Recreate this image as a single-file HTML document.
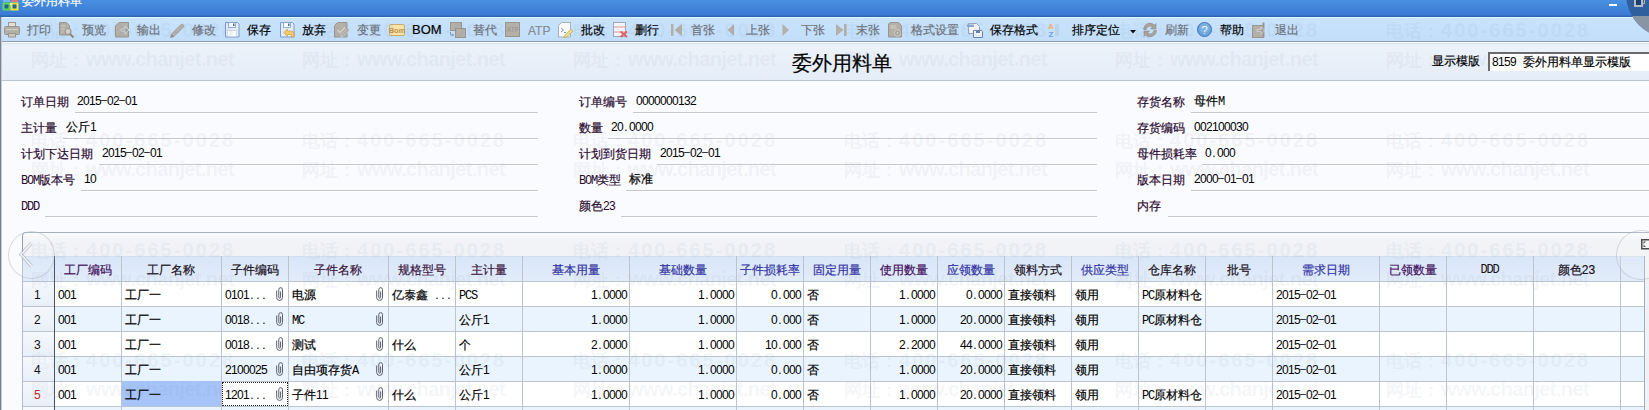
<!DOCTYPE html>
<html><head><meta charset="utf-8">
<style>
*{box-sizing:border-box}
html,body{margin:0;padding:0}
body{width:1649px;height:410px;overflow:hidden;position:relative;background:#fafbfe;font-family:"Liberation Sans",sans-serif;font-size:12px;color:#000}
.ab{position:absolute}
.t{position:absolute;white-space:nowrap;line-height:14px;font-size:12px;-webkit-text-stroke:0.2px currentColor}
.mono{font-family:"Liberation Mono",monospace;letter-spacing:-1.2px;-webkit-text-stroke:0}
i.bd,i.bl{display:inline-block;width:6px;text-align:center;font-style:normal;-webkit-text-stroke:0;font-size:12px;letter-spacing:0}
i.bl{font-family:"Liberation Mono",monospace}
#title{left:0;top:0;width:1649px;height:17px;background:linear-gradient(#4990e2,#3a7ad4 15px,#2f64b0 16px,#2f64b0)}
#tb{left:0;top:17px;width:1649px;height:25px;background:linear-gradient(#c8e3fc,#c2defa);border-top:1px solid #def8ff;border-bottom:1px solid #929eac}
#hd{left:0;top:42px;width:1649px;height:39px;background:linear-gradient(#f4f9ff 0,#f4f9ff 1px,#dce8f4 1px,#dce8f4 2px,#ecf2fa 3px,#e5edf8);border-bottom:1px solid #bcc4d0}
.lbl{color:#2a0a30}
.ul{position:absolute;height:2px;border-top:1px solid #c6c8cc;background:#fff}
.wm{position:absolute;white-space:nowrap;font-size:20px;line-height:20px;font-weight:bold;color:rgba(110,120,150,0.085)}.wc{font-size:18px;display:inline-block;width:55px}.wd{letter-spacing:2.05px}.wu{letter-spacing:-0.6px}
.tbt{position:absolute;white-space:nowrap;font-size:12px;line-height:14px;top:23px;-webkit-text-stroke:0.2px currentColor}
.dis{color:#6e737a}
svg{position:absolute;overflow:visible}
</style></head><body>

<div class="ab" id="title"></div>
<div class="t" style="left:22px;top:-6px;color:#fff;font-size:12px">委外用料单</div>
<svg style="left:0;top:0" width="20" height="12" viewBox="0 0 20 12">
<rect x="3" y="-3" width="7" height="5" fill="#70b4f0"/><rect x="11" y="-3" width="7" height="5" fill="#e8786a"/><rect x="11" y="-3" width="2" height="5" fill="#b080c0"/>
<rect x="3.5" y="3.5" width="6" height="6" fill="#2a5e9e" stroke="#5cd860" stroke-width="2"/><rect x="11.5" y="3.5" width="6" height="6" fill="#2a5e9e" stroke="#f2e838" stroke-width="2"/>
<rect x="10" y="3" width="1.5" height="2" fill="#e0f0ff"/>
</svg>
<div class="ab" style="left:1609px;top:4px;width:8px;height:2px;background:#fff"></div>
<div class="ab" id="tb"></div>
<div class="ab" id="hd"></div>
<div class="ab" style="left:1626px;top:-51px;width:89px;height:89px;border-radius:50%;background:#2f5f9c;overflow:hidden"><div class="ab" style="left:0;top:67px;width:88px;height:40px;background:#8a95a4"></div></div>
<svg style="left:1634px;top:-3px" width="12" height="10"><rect x="4.5" y="0.5" width="6" height="6" fill="none" stroke="#a8b0bc" stroke-width="1.2"/><rect x="1" y="2" width="7" height="7" fill="#1e3e6e" stroke="#b4bcc8" stroke-width="2"/></svg>
<svg style="left:4px;top:22px" width="16" height="16"><rect x="4.5" y="0.5" width="7" height="4" fill="#e4e0d8" stroke="#9a968e"/><rect x="0.5" y="4.5" width="15" height="8" rx="1" fill="#b4b0a8" stroke="#9a968e"/><path d="M2 7.5h12" stroke="#d4d0c8"/><rect x="4.5" y="11.5" width="7" height="3.5" fill="#ccc8c0" stroke="#9a968e"/></svg>
<svg style="left:59px;top:22px" width="16" height="16"><path d="M0.5 0.5h7l3 3v9.5h-10z" fill="#b4b0a8" stroke="#9a968e"/><path d="M2 4h4M2 7h5M2 10h4" stroke="#d4d0c8"/><circle cx="9" cy="9.5" r="3" fill="#d4d0c8" stroke="#9a968e" stroke-width="1.2"/><path d="M11 12l3.5 3.5" stroke="#8a867e" stroke-width="2"/></svg>
<svg style="left:115px;top:22px" width="16" height="16"><path d="M0.5 4l3.5-3.5h9.5v14.5h-13z" fill="#b4b0a8" stroke="#9a968e"/><path d="M6 7h4v-3l4 4-4 4v-3h-4z" fill="#a8a49c" stroke="#dfe6ee" stroke-width="0.7"/></svg>
<svg style="left:170px;top:22px" width="16" height="16"><path d="M1.5 12l9.5-9.5a1.8 1.8 0 0 1 2.5 2.5l-9.5 9.5-3.5 1z" fill="#b4b0a8" stroke="#9a968e" stroke-width="0.8"/><path d="M1 15.5l0.8-3 2.2 2.2z" fill="#8a867e"/></svg>
<svg style="left:225px;top:22px" width="15" height="16"><path d="M0.5 0.5h12l1.5 1.5v13h-13.5z" fill="#e4ecf8" stroke="#7e9cc8"/><rect x="3.5" y="0.5" width="7" height="5" fill="#fafcff" stroke="#7e9cc8" stroke-width="0.8"/><rect x="8" y="1.5" width="1.5" height="2.5" fill="#556a90"/><rect x="2.5" y="8.5" width="9" height="6" fill="#f6f8fc" stroke="#c0cce0" stroke-width="0.6"/></svg>
<svg style="left:280px;top:22px" width="16" height="16"><path d="M0.5 0.5h12l1.5 1.5v13h-13.5z" fill="#e4ecf8" stroke="#7e9cc8"/><rect x="3.5" y="0.5" width="7" height="5" fill="#fafcff" stroke="#7e9cc8" stroke-width="0.8"/><rect x="8" y="1.5" width="1.5" height="2.5" fill="#556a90"/><path d="M3.5 10.5l4-3.5v2h3.5a3 3 0 0 1 3 3v3h-2.5v-2.5h-4v2z" fill="#f2c870" stroke="#c8983c" stroke-width="0.6"/></svg>
<svg style="left:334px;top:22px" width="16" height="16"><path d="M0.5 3.5l3-3h9.5v14.5h-12.5z" fill="#b4b0a8" stroke="#9a968e"/><path d="M3.5 8l2.5 2.5 5-5" stroke="#d4d0c8" stroke-width="1.4" fill="none"/><path d="M7 15l1-2.5 6-6 1.5 1.5-6 6z" fill="#a8a49c" stroke="#dfe6ee" stroke-width="0.5"/></svg>
<svg style="left:389px;top:24px" width="16" height="12"><rect x="0.5" y="0.5" width="15" height="11" rx="1.5" fill="#f8e4a8" stroke="#c8ac70"/><text x="8" y="8.8" font-size="7.5" font-weight="bold" font-family="Liberation Sans" text-anchor="middle" fill="#c09448">Bom</text></svg>
<svg style="left:450px;top:22px" width="16" height="16"><rect x="0.5" y="0.5" width="11" height="8" fill="#b4b0a8" stroke="#9a968e"/><rect x="5.5" y="6.5" width="10" height="9" fill="#b4b0a8" stroke="#9a968e"/><path d="M0.5 10v3h3M2 11.5l1.5 1.5-1.5 1.5" stroke="#7a92b8" fill="none" stroke-width="0.9"/></svg>
<svg style="left:505px;top:22px" width="15" height="15"><rect x="0.5" y="0.5" width="14" height="14" fill="#b4b0a8" stroke="#9a968e"/><text x="7.5" y="10" font-size="6.5" font-family="Liberation Sans" text-anchor="middle" fill="#a09c94" font-weight="bold">ATP</text></svg>
<svg style="left:558px;top:22px" width="16" height="16"><path d="M0.5 3.5l3-3h9v14.5h-12z" fill="#f6f8fa" stroke="#a8b0b8"/><path d="M3 6l2.5 2-2.5 2M6 10.5h2" stroke="#7a8aa0" fill="none" stroke-width="0.9"/><path d="M6 15.5l1-2.5 6-6 2 2-6 6z" fill="#eedc80" stroke="#b8a050" stroke-width="0.6"/></svg>
<svg style="left:613px;top:22px" width="16" height="16"><rect x="0.5" y="0.5" width="12" height="14" fill="#f4f6fa" stroke="#98a8c0"/><path d="M1 5h11.5M1 10h11.5" stroke="#e89090" stroke-width="1"/><path d="M7.5 9.5l6.5 5.5M14 9.5l-6.5 5.5" stroke="#e06060" stroke-width="1.8"/></svg>
<svg style="left:671px;top:23px" width="12" height="14"><rect x="0" y="1" width="2.5" height="12" fill="#b4b0a8"/><path d="M11 1v12l-7.5-6z" fill="#b4b0a8"/></svg>
<svg style="left:727px;top:23px" width="8" height="14"><path d="M7 1v12l-6.5-6z" fill="#b4b0a8"/></svg>
<svg style="left:782px;top:23px" width="8" height="14"><path d="M0.5 1v12l6.5-6z" fill="#b4b0a8"/></svg>
<svg style="left:836px;top:23px" width="12" height="14"><path d="M0 1v12l7.5-6z" fill="#b4b0a8"/><rect x="8" y="1" width="2.5" height="12" fill="#b4b0a8"/></svg>
<svg style="left:888px;top:22px" width="16" height="16"><path d="M0.5 2l1.5-1.5h8.5l3 3v11.5h-13z" fill="#b4b0a8" stroke="#9a968e"/><path d="M2.5 4h6M2.5 6h6" stroke="#d4d0c8"/><circle cx="9.5" cy="11" r="3.2" fill="#a8a49c" stroke="#d4d0c8" stroke-width="0.9"/><circle cx="9.5" cy="11" r="1" fill="#d4d0c8"/></svg>
<svg style="left:967px;top:22px" width="16" height="16"><path d="M1.5 1.5h8l3 3v7h-11z" fill="#f4f6fa" stroke="#98a4b8"/><rect x="0" y="2.5" width="7" height="2.5" fill="#8aa6d4"/><path d="M6.5 8.5h8l1 1v6h-9z" fill="#f0f4fa" stroke="#6a82aa"/><rect x="9" y="8.5" width="4" height="2.5" fill="#6a82aa"/></svg>
<svg style="left:1047px;top:21px" width="12" height="17"><text x="4" y="8" font-size="8" font-weight="bold" font-family="Liberation Sans" text-anchor="middle" fill="#f0b060">A</text><text x="4" y="16" font-size="8" font-weight="bold" font-family="Liberation Sans" text-anchor="middle" fill="#6aa0e0">Z</text><path d="M9 3v12M11 3v12" stroke="#b0bccc" stroke-width="0.8"/></svg>
<svg style="left:1130px;top:30px" width="6" height="4"><path d="M0 0h6l-3 3.5z" fill="#111"/></svg>
<svg style="left:1142px;top:22px" width="16" height="16"><path d="M1.5 7.5a6.5 6.5 0 0 1 11-4.5l1.5-1.5v5.5h-5.5l2-2a3.8 3.8 0 0 0-6.3 2.5z" fill="#a8a49c" stroke="#8e8a82" stroke-width="0.6"/><path d="M14.5 8.5a6.5 6.5 0 0 1-11 4.5l-1.5 1.5v-5.5h5.5l-2 2a3.8 3.8 0 0 0 6.3-2.5z" fill="#a8a49c" stroke="#8e8a82" stroke-width="0.6"/></svg>
<svg style="left:1197px;top:22px" width="16" height="16"><circle cx="7.5" cy="7.5" r="7" fill="#6aa4dc" stroke="#3c74b8" stroke-width="1"/><circle cx="7.5" cy="6" r="5" fill="#8cbce8" opacity="0.6"/><text x="7.5" y="12" font-size="11" font-family="Liberation Sans" text-anchor="middle" fill="#fff">?</text></svg>
<svg style="left:1252px;top:22px" width="16" height="16"><rect x="0.5" y="3.5" width="11" height="12" fill="#b4b0a8" stroke="#9a968e"/><path d="M11.5 0.5v15" stroke="#9a968e" stroke-width="2"/><path d="M5 7.5h4v-2.5l4 3.5-4 3.5v-2.5h-4z" fill="#a8a49c" stroke="#dfe6ee" stroke-width="0.6"/></svg>
<div class="tbt dis" style="left:27px">打印</div>
<div class="tbt dis" style="left:82px">预览</div>
<div class="tbt dis" style="left:137px">输出</div>
<div class="tbt dis" style="left:192px">修改</div>
<div class="tbt" style="left:247px">保存</div>
<div class="tbt" style="left:302px">放弃</div>
<div class="tbt dis" style="left:357px">变更</div>
<div class="tbt dis" style="left:473px">替代</div>
<div class="tbt" style="left:581px">批改</div>
<div class="tbt" style="left:635px">删行</div>
<div class="tbt dis" style="left:691px">首张</div>
<div class="tbt dis" style="left:746px">上张</div>
<div class="tbt dis" style="left:801px">下张</div>
<div class="tbt dis" style="left:856px">末张</div>
<div class="tbt dis" style="left:911px">格式设置</div>
<div class="tbt" style="left:990px">保存格式</div>
<div class="tbt" style="left:1072px">排序定位</div>
<div class="tbt dis" style="left:1165px">刷新</div>
<div class="tbt" style="left:1220px">帮助</div>
<div class="tbt dis" style="left:1275px">退出</div>
<div class="tbt" style="left:412px;top:22px;font-size:13px;line-height:16px">BOM</div>
<div class="tbt dis" style="left:528px;top:23px;font-size:12px;line-height:16px;color:#868c94">ATP</div>
<div class="t" style="left:792px;top:52px;font-size:20px;line-height:22px">委外用料单</div>
<div class="t" style="left:1432px;top:54px">显示模版</div>
<div class="ab" style="left:1488px;top:52px;width:170px;height:19px;background:#fff;border-top:2px solid #6a6a6a;border-left:2px solid #6a6a6a;"></div>
<div class="t" style="left:1492px;top:55px"><i class="bd">8</i><i class="bd">1</i><i class="bd">5</i><i class="bd">9</i><span style="margin-left:7px">委外用料单显示模版</span></div>
<div class="t lbl" style="left:21px;top:95px">订单日期</div>
<div class="t" style="left:77px;top:94px"><i class="bd">2</i><i class="bd">0</i><i class="bd">1</i><i class="bd">5</i><i class="bd" style="font-size:10.5px;position:relative;top:-2px">&#8211;</i><i class="bd">0</i><i class="bd">2</i><i class="bd" style="font-size:10.5px;position:relative;top:-2px">&#8211;</i><i class="bd">0</i><i class="bd">1</i></div>
<div class="ul" style="left:75px;top:112px;width:463px"></div>
<div class="t lbl" style="left:21px;top:121px">主计量</div>
<div class="t" style="left:66px;top:120px">公斤<i class="bd">1</i></div>
<div class="ul" style="left:63px;top:138px;width:475px"></div>
<div class="t lbl" style="left:21px;top:147px">计划下达日期</div>
<div class="t" style="left:102px;top:146px"><i class="bd">2</i><i class="bd">0</i><i class="bd">1</i><i class="bd">5</i><i class="bd" style="font-size:10.5px;position:relative;top:-2px">&#8211;</i><i class="bd">0</i><i class="bd">2</i><i class="bd" style="font-size:10.5px;position:relative;top:-2px">&#8211;</i><i class="bd">0</i><i class="bd">1</i></div>
<div class="ul" style="left:99px;top:164px;width:439px"></div>
<div class="t lbl" style="left:21px;top:173px"><i class="bl">B</i><i class="bl">O</i><i class="bl">M</i>版本号</div>
<div class="t" style="left:84px;top:172px"><i class="bd">1</i><i class="bd">0</i></div>
<div class="ul" style="left:81px;top:190px;width:457px"></div>
<div class="t lbl" style="left:21px;top:199px"><i class="bl">D</i><i class="bl">D</i><i class="bl">D</i></div>
<div class="ul" style="left:45px;top:216px;width:493px"></div>
<div class="t lbl" style="left:579px;top:95px">订单编号</div>
<div class="t" style="left:636px;top:94px"><i class="bd">0</i><i class="bd">0</i><i class="bd">0</i><i class="bd">0</i><i class="bd">0</i><i class="bd">0</i><i class="bd">0</i><i class="bd">1</i><i class="bd">3</i><i class="bd">2</i></div>
<div class="ul" style="left:633px;top:112px;width:464px"></div>
<div class="t lbl" style="left:579px;top:121px">数量</div>
<div class="t" style="left:611px;top:120px"><i class="bd">2</i><i class="bd">0</i><i class="bd">.</i><i class="bd">0</i><i class="bd">0</i><i class="bd">0</i><i class="bd">0</i></div>
<div class="ul" style="left:608px;top:138px;width:489px"></div>
<div class="t lbl" style="left:579px;top:147px">计划到货日期</div>
<div class="t" style="left:660px;top:146px"><i class="bd">2</i><i class="bd">0</i><i class="bd">1</i><i class="bd">5</i><i class="bd" style="font-size:10.5px;position:relative;top:-2px">&#8211;</i><i class="bd">0</i><i class="bd">2</i><i class="bd" style="font-size:10.5px;position:relative;top:-2px">&#8211;</i><i class="bd">0</i><i class="bd">1</i></div>
<div class="ul" style="left:657px;top:164px;width:440px"></div>
<div class="t lbl" style="left:579px;top:173px"><i class="bl">B</i><i class="bl">O</i><i class="bl">M</i>类型</div>
<div class="t" style="left:629px;top:172px">标准</div>
<div class="ul" style="left:626px;top:190px;width:471px"></div>
<div class="t lbl" style="left:579px;top:199px">颜色<i class="bd">2</i><i class="bd">3</i></div>
<div class="ul" style="left:621px;top:216px;width:476px"></div>
<div class="t lbl" style="left:1137px;top:95px">存货名称</div>
<div class="t" style="left:1194px;top:94px">母件<i class="bl">M</i></div>
<div class="ul" style="left:1191px;top:112px;width:458px"></div>
<div class="t lbl" style="left:1137px;top:121px">存货编码</div>
<div class="t" style="left:1194px;top:120px"><i class="bd">0</i><i class="bd">0</i><i class="bd">2</i><i class="bd">1</i><i class="bd">0</i><i class="bd">0</i><i class="bd">0</i><i class="bd">3</i><i class="bd">0</i></div>
<div class="ul" style="left:1191px;top:138px;width:458px"></div>
<div class="t lbl" style="left:1137px;top:147px">母件损耗率</div>
<div class="t" style="left:1205px;top:146px"><i class="bd">0</i><i class="bd">.</i><i class="bd">0</i><i class="bd">0</i><i class="bd">0</i></div>
<div class="ul" style="left:1202px;top:164px;width:447px"></div>
<div class="t lbl" style="left:1137px;top:173px">版本日期</div>
<div class="t" style="left:1194px;top:172px"><i class="bd">2</i><i class="bd">0</i><i class="bd">0</i><i class="bd">0</i><i class="bd" style="font-size:10.5px;position:relative;top:-2px">&#8211;</i><i class="bd">0</i><i class="bd">1</i><i class="bd" style="font-size:10.5px;position:relative;top:-2px">&#8211;</i><i class="bd">0</i><i class="bd">1</i></div>
<div class="ul" style="left:1191px;top:190px;width:458px"></div>
<div class="t lbl" style="left:1137px;top:199px">内存</div>
<div class="ul" style="left:1168px;top:216px;width:481px"></div>
<div class="ab" style="left:22px;top:232px;width:1640px;height:200px;border-top:1px solid #a8b0c0;border-left:1px solid #8c94a6;border-top-left-radius:4px;background:linear-gradient(#fbfcfe,#f6f8fb 3px,#f1f3f6 8px,#f0f2f5 24px)"></div>
<div class="ab" style="left:23px;top:256px;width:1621px;height:25px;background:linear-gradient(#d8e6f8,#e2ecfa)"></div>
<div class="ab" style="left:54px;top:281px;width:1590px;height:25px;background:#ffffff"></div>
<div class="ab" style="left:23px;top:281px;width:31px;height:25px;background:linear-gradient(#f6f9fd,#e8eff8)"></div>
<div class="ab" style="left:54px;top:306px;width:1590px;height:25px;background:#e9f4fe"></div>
<div class="ab" style="left:23px;top:306px;width:31px;height:25px;background:linear-gradient(#f6f9fd,#e8eff8)"></div>
<div class="ab" style="left:54px;top:331px;width:1590px;height:25px;background:#ffffff"></div>
<div class="ab" style="left:23px;top:331px;width:31px;height:25px;background:linear-gradient(#f6f9fd,#e8eff8)"></div>
<div class="ab" style="left:54px;top:356px;width:1590px;height:25px;background:#e9f4fe"></div>
<div class="ab" style="left:23px;top:356px;width:31px;height:25px;background:linear-gradient(#f6f9fd,#e8eff8)"></div>
<div class="ab" style="left:54px;top:381px;width:1590px;height:25px;background:#ffffff"></div>
<div class="ab" style="left:23px;top:381px;width:31px;height:25px;background:linear-gradient(#f6f9fd,#e8eff8)"></div>
<div class="ab" style="left:54px;top:406px;width:1590px;height:10px;background:#e9f4fe"></div>
<div class="ab" style="left:23px;top:406px;width:31px;height:10px;background:#f6f9fd"></div>
<div class="ab" style="left:23px;top:256px;width:1621px;height:1px;background:#d4deec"></div>
<div class="ab" style="left:23px;top:281px;width:1621px;height:1px;background:#bcc4d0"></div>
<div class="ab" style="left:23px;top:306px;width:1621px;height:1px;background:#bcc4d0"></div>
<div class="ab" style="left:23px;top:331px;width:1621px;height:1px;background:#bcc4d0"></div>
<div class="ab" style="left:23px;top:356px;width:1621px;height:1px;background:#bcc4d0"></div>
<div class="ab" style="left:23px;top:381px;width:1621px;height:1px;background:#bcc4d0"></div>
<div class="ab" style="left:23px;top:406px;width:1621px;height:1px;background:#bcc4d0"></div>
<div class="ab" style="left:121px;top:256px;width:1px;height:160px;background:#bcc4d0"></div>
<div class="ab" style="left:221px;top:256px;width:1px;height:160px;background:#bcc4d0"></div>
<div class="ab" style="left:288px;top:256px;width:1px;height:160px;background:#bcc4d0"></div>
<div class="ab" style="left:388px;top:256px;width:1px;height:160px;background:#bcc4d0"></div>
<div class="ab" style="left:455px;top:256px;width:1px;height:160px;background:#bcc4d0"></div>
<div class="ab" style="left:522px;top:256px;width:1px;height:160px;background:#bcc4d0"></div>
<div class="ab" style="left:629px;top:256px;width:1px;height:160px;background:#bcc4d0"></div>
<div class="ab" style="left:736px;top:256px;width:1px;height:160px;background:#bcc4d0"></div>
<div class="ab" style="left:803px;top:256px;width:1px;height:160px;background:#bcc4d0"></div>
<div class="ab" style="left:870px;top:256px;width:1px;height:160px;background:#bcc4d0"></div>
<div class="ab" style="left:937px;top:256px;width:1px;height:160px;background:#bcc4d0"></div>
<div class="ab" style="left:1004px;top:256px;width:1px;height:160px;background:#bcc4d0"></div>
<div class="ab" style="left:1071px;top:256px;width:1px;height:160px;background:#bcc4d0"></div>
<div class="ab" style="left:1138px;top:256px;width:1px;height:160px;background:#bcc4d0"></div>
<div class="ab" style="left:1205px;top:256px;width:1px;height:160px;background:#bcc4d0"></div>
<div class="ab" style="left:1272px;top:256px;width:1px;height:160px;background:#bcc4d0"></div>
<div class="ab" style="left:1379px;top:256px;width:1px;height:160px;background:#bcc4d0"></div>
<div class="ab" style="left:1446px;top:256px;width:1px;height:160px;background:#bcc4d0"></div>
<div class="ab" style="left:1533px;top:256px;width:1px;height:160px;background:#bcc4d0"></div>
<div class="ab" style="left:1620px;top:256px;width:1px;height:160px;background:#bcc4d0"></div>
<div class="ab" style="left:54px;top:256px;width:1px;height:160px;background:#4a5468"></div>
<div class="ab" style="left:122px;top:381px;width:99px;height:25px;background:#a6c4f8"></div>
<div class="ab" style="left:1644px;top:256px;width:1px;height:160px;background:#a4acba"></div>
<div class="ab" style="left:22px;top:256px;width:1px;height:160px;background:#b4bccc"></div>
<div class="t" style="left:54px;width:67px;top:263px;text-align:center;color:#44105e">工厂编码</div>
<div class="t" style="left:121px;width:100px;top:263px;text-align:center;color:#1a1020">工厂名称</div>
<div class="t" style="left:221px;width:67px;top:263px;text-align:center;color:#1a1020">子件编码</div>
<div class="t" style="left:288px;width:100px;top:263px;text-align:center;color:#3a1440">子件名称</div>
<div class="t" style="left:388px;width:67px;top:263px;text-align:center;color:#3a1440">规格型号</div>
<div class="t" style="left:455px;width:67px;top:263px;text-align:center;color:#3a1440">主计量</div>
<div class="t" style="left:522px;width:107px;top:263px;text-align:center;color:#3434a4">基本用量</div>
<div class="t" style="left:629px;width:107px;top:263px;text-align:center;color:#3434a4">基础数量</div>
<div class="t" style="left:736px;width:67px;top:263px;text-align:center;color:#3434a4">子件损耗率</div>
<div class="t" style="left:803px;width:67px;top:263px;text-align:center;color:#3434a4">固定用量</div>
<div class="t" style="left:870px;width:67px;top:263px;text-align:center;color:#44105e">使用数量</div>
<div class="t" style="left:937px;width:67px;top:263px;text-align:center;color:#3434a4">应领数量</div>
<div class="t" style="left:1004px;width:67px;top:263px;text-align:center;color:#1a1020">领料方式</div>
<div class="t" style="left:1071px;width:67px;top:263px;text-align:center;color:#3434a4">供应类型</div>
<div class="t" style="left:1138px;width:67px;top:263px;text-align:center;color:#1a1020">仓库名称</div>
<div class="t" style="left:1205px;width:67px;top:263px;text-align:center;color:#1a1020">批号</div>
<div class="t" style="left:1272px;width:107px;top:263px;text-align:center;color:#3434a4">需求日期</div>
<div class="t" style="left:1379px;width:67px;top:263px;text-align:center;color:#44105e">已领数量</div>
<div class="t mono" style="left:1446px;width:87px;top:263px;text-align:center;color:#1a1020">DDD</div>
<div class="t" style="left:1533px;width:87px;top:263px;text-align:center;color:#1a1020">颜色23</div>
<div class="t" style="left:1620px;width:24px;top:263px;text-align:center;color:#1a1020"></div>
<div class="t" style="left:22px;width:30px;top:288px;text-align:center;color:#111"><i class="bd">1</i></div>
<div class="t" style="left:58px;top:288px"><i class="bd">0</i><i class="bd">0</i><i class="bd">1</i></div>
<div class="t" style="left:125px;top:288px">工厂一</div>
<div class="t" style="left:225px;top:288px"><i class="bd">0</i><i class="bd">1</i><i class="bd">0</i><i class="bd">1</i><i class="bd">.</i><i class="bd">.</i><i class="bd">.</i></div>
<div class="t" style="left:292px;top:288px">电源</div>
<div class="t" style="left:392px;top:288px">亿泰鑫<i class="bd">&nbsp;</i><i class="bd">.</i><i class="bd">.</i><i class="bd">.</i></div>
<div class="t" style="left:459px;top:288px"><i class="bl">P</i><i class="bl">C</i><i class="bl">S</i></div>
<div class="t" style="left:522px;width:105px;top:288px;text-align:right"><i class="bd">1</i><i class="bd">.</i><i class="bd">0</i><i class="bd">0</i><i class="bd">0</i><i class="bd">0</i></div>
<div class="t" style="left:629px;width:105px;top:288px;text-align:right"><i class="bd">1</i><i class="bd">.</i><i class="bd">0</i><i class="bd">0</i><i class="bd">0</i><i class="bd">0</i></div>
<div class="t" style="left:736px;width:65px;top:288px;text-align:right"><i class="bd">0</i><i class="bd">.</i><i class="bd">0</i><i class="bd">0</i><i class="bd">0</i></div>
<div class="t" style="left:807px;top:288px">否</div>
<div class="t" style="left:870px;width:65px;top:288px;text-align:right"><i class="bd">1</i><i class="bd">.</i><i class="bd">0</i><i class="bd">0</i><i class="bd">0</i><i class="bd">0</i></div>
<div class="t" style="left:937px;width:65px;top:288px;text-align:right"><i class="bd">0</i><i class="bd">.</i><i class="bd">0</i><i class="bd">0</i><i class="bd">0</i><i class="bd">0</i></div>
<div class="t" style="left:1008px;top:288px">直接领料</div>
<div class="t" style="left:1075px;top:288px">领用</div>
<div class="t" style="left:1142px;top:288px"><i class="bl">P</i><i class="bl">C</i>原材料仓</div>
<div class="t" style="left:1276px;top:288px"><i class="bd">2</i><i class="bd">0</i><i class="bd">1</i><i class="bd">5</i><i class="bd" style="font-size:10.5px;position:relative;top:-2px">&#8211;</i><i class="bd">0</i><i class="bd">2</i><i class="bd" style="font-size:10.5px;position:relative;top:-2px">&#8211;</i><i class="bd">0</i><i class="bd">1</i></div>
<svg style="left:276px;top:287px" width="8" height="14" viewBox="0 0 8 14"><path d="M0.7 3.5V10.5A2.9 2.9 0 0 0 6.5 10.5V2.5A1.85 1.85 0 0 0 2.8 2.5V10.3A0.9 0.9 0 0 0 4.6 10.3V4.5" fill="none" stroke="#5a5e6a" stroke-width="1"/></svg>
<svg style="left:376px;top:287px" width="8" height="14" viewBox="0 0 8 14"><path d="M0.7 3.5V10.5A2.9 2.9 0 0 0 6.5 10.5V2.5A1.85 1.85 0 0 0 2.8 2.5V10.3A0.9 0.9 0 0 0 4.6 10.3V4.5" fill="none" stroke="#5a5e6a" stroke-width="1"/></svg>
<div class="t" style="left:22px;width:30px;top:313px;text-align:center;color:#111"><i class="bd">2</i></div>
<div class="t" style="left:58px;top:313px"><i class="bd">0</i><i class="bd">0</i><i class="bd">1</i></div>
<div class="t" style="left:125px;top:313px">工厂一</div>
<div class="t" style="left:225px;top:313px"><i class="bd">0</i><i class="bd">0</i><i class="bd">1</i><i class="bd">8</i><i class="bd">.</i><i class="bd">.</i><i class="bd">.</i></div>
<div class="t" style="left:292px;top:313px"><i class="bl">M</i><i class="bl">C</i></div>
<div class="t" style="left:459px;top:313px">公斤<i class="bd">1</i></div>
<div class="t" style="left:522px;width:105px;top:313px;text-align:right"><i class="bd">1</i><i class="bd">.</i><i class="bd">0</i><i class="bd">0</i><i class="bd">0</i><i class="bd">0</i></div>
<div class="t" style="left:629px;width:105px;top:313px;text-align:right"><i class="bd">1</i><i class="bd">.</i><i class="bd">0</i><i class="bd">0</i><i class="bd">0</i><i class="bd">0</i></div>
<div class="t" style="left:736px;width:65px;top:313px;text-align:right"><i class="bd">0</i><i class="bd">.</i><i class="bd">0</i><i class="bd">0</i><i class="bd">0</i></div>
<div class="t" style="left:807px;top:313px">否</div>
<div class="t" style="left:870px;width:65px;top:313px;text-align:right"><i class="bd">1</i><i class="bd">.</i><i class="bd">0</i><i class="bd">0</i><i class="bd">0</i><i class="bd">0</i></div>
<div class="t" style="left:937px;width:65px;top:313px;text-align:right"><i class="bd">2</i><i class="bd">0</i><i class="bd">.</i><i class="bd">0</i><i class="bd">0</i><i class="bd">0</i><i class="bd">0</i></div>
<div class="t" style="left:1008px;top:313px">直接领料</div>
<div class="t" style="left:1075px;top:313px">领用</div>
<div class="t" style="left:1142px;top:313px"><i class="bl">P</i><i class="bl">C</i>原材料仓</div>
<div class="t" style="left:1276px;top:313px"><i class="bd">2</i><i class="bd">0</i><i class="bd">1</i><i class="bd">5</i><i class="bd" style="font-size:10.5px;position:relative;top:-2px">&#8211;</i><i class="bd">0</i><i class="bd">2</i><i class="bd" style="font-size:10.5px;position:relative;top:-2px">&#8211;</i><i class="bd">0</i><i class="bd">1</i></div>
<svg style="left:276px;top:312px" width="8" height="14" viewBox="0 0 8 14"><path d="M0.7 3.5V10.5A2.9 2.9 0 0 0 6.5 10.5V2.5A1.85 1.85 0 0 0 2.8 2.5V10.3A0.9 0.9 0 0 0 4.6 10.3V4.5" fill="none" stroke="#5a5e6a" stroke-width="1"/></svg>
<svg style="left:376px;top:312px" width="8" height="14" viewBox="0 0 8 14"><path d="M0.7 3.5V10.5A2.9 2.9 0 0 0 6.5 10.5V2.5A1.85 1.85 0 0 0 2.8 2.5V10.3A0.9 0.9 0 0 0 4.6 10.3V4.5" fill="none" stroke="#5a5e6a" stroke-width="1"/></svg>
<div class="t" style="left:22px;width:30px;top:338px;text-align:center;color:#111"><i class="bd">3</i></div>
<div class="t" style="left:58px;top:338px"><i class="bd">0</i><i class="bd">0</i><i class="bd">1</i></div>
<div class="t" style="left:125px;top:338px">工厂一</div>
<div class="t" style="left:225px;top:338px"><i class="bd">0</i><i class="bd">0</i><i class="bd">1</i><i class="bd">8</i><i class="bd">.</i><i class="bd">.</i><i class="bd">.</i></div>
<div class="t" style="left:292px;top:338px">测试</div>
<div class="t" style="left:392px;top:338px">什么</div>
<div class="t" style="left:459px;top:338px">个</div>
<div class="t" style="left:522px;width:105px;top:338px;text-align:right"><i class="bd">2</i><i class="bd">.</i><i class="bd">0</i><i class="bd">0</i><i class="bd">0</i><i class="bd">0</i></div>
<div class="t" style="left:629px;width:105px;top:338px;text-align:right"><i class="bd">1</i><i class="bd">.</i><i class="bd">0</i><i class="bd">0</i><i class="bd">0</i><i class="bd">0</i></div>
<div class="t" style="left:736px;width:65px;top:338px;text-align:right"><i class="bd">1</i><i class="bd">0</i><i class="bd">.</i><i class="bd">0</i><i class="bd">0</i><i class="bd">0</i></div>
<div class="t" style="left:807px;top:338px">否</div>
<div class="t" style="left:870px;width:65px;top:338px;text-align:right"><i class="bd">2</i><i class="bd">.</i><i class="bd">2</i><i class="bd">0</i><i class="bd">0</i><i class="bd">0</i></div>
<div class="t" style="left:937px;width:65px;top:338px;text-align:right"><i class="bd">4</i><i class="bd">4</i><i class="bd">.</i><i class="bd">0</i><i class="bd">0</i><i class="bd">0</i><i class="bd">0</i></div>
<div class="t" style="left:1008px;top:338px">直接领料</div>
<div class="t" style="left:1075px;top:338px">领用</div>
<div class="t" style="left:1276px;top:338px"><i class="bd">2</i><i class="bd">0</i><i class="bd">1</i><i class="bd">5</i><i class="bd" style="font-size:10.5px;position:relative;top:-2px">&#8211;</i><i class="bd">0</i><i class="bd">2</i><i class="bd" style="font-size:10.5px;position:relative;top:-2px">&#8211;</i><i class="bd">0</i><i class="bd">1</i></div>
<svg style="left:276px;top:337px" width="8" height="14" viewBox="0 0 8 14"><path d="M0.7 3.5V10.5A2.9 2.9 0 0 0 6.5 10.5V2.5A1.85 1.85 0 0 0 2.8 2.5V10.3A0.9 0.9 0 0 0 4.6 10.3V4.5" fill="none" stroke="#5a5e6a" stroke-width="1"/></svg>
<svg style="left:376px;top:337px" width="8" height="14" viewBox="0 0 8 14"><path d="M0.7 3.5V10.5A2.9 2.9 0 0 0 6.5 10.5V2.5A1.85 1.85 0 0 0 2.8 2.5V10.3A0.9 0.9 0 0 0 4.6 10.3V4.5" fill="none" stroke="#5a5e6a" stroke-width="1"/></svg>
<div class="t" style="left:22px;width:30px;top:363px;text-align:center;color:#111"><i class="bd">4</i></div>
<div class="t" style="left:58px;top:363px"><i class="bd">0</i><i class="bd">0</i><i class="bd">1</i></div>
<div class="t" style="left:125px;top:363px">工厂一</div>
<div class="t" style="left:225px;top:363px"><i class="bd">2</i><i class="bd">1</i><i class="bd">0</i><i class="bd">0</i><i class="bd">0</i><i class="bd">2</i><i class="bd">5</i></div>
<div class="t" style="left:292px;top:363px">自由项存货<i class="bl">A</i></div>
<div class="t" style="left:459px;top:363px">公斤<i class="bd">1</i></div>
<div class="t" style="left:522px;width:105px;top:363px;text-align:right"><i class="bd">1</i><i class="bd">.</i><i class="bd">0</i><i class="bd">0</i><i class="bd">0</i><i class="bd">0</i></div>
<div class="t" style="left:629px;width:105px;top:363px;text-align:right"><i class="bd">1</i><i class="bd">.</i><i class="bd">0</i><i class="bd">0</i><i class="bd">0</i><i class="bd">0</i></div>
<div class="t" style="left:736px;width:65px;top:363px;text-align:right"><i class="bd">0</i><i class="bd">.</i><i class="bd">0</i><i class="bd">0</i><i class="bd">0</i></div>
<div class="t" style="left:807px;top:363px">否</div>
<div class="t" style="left:870px;width:65px;top:363px;text-align:right"><i class="bd">1</i><i class="bd">.</i><i class="bd">0</i><i class="bd">0</i><i class="bd">0</i><i class="bd">0</i></div>
<div class="t" style="left:937px;width:65px;top:363px;text-align:right"><i class="bd">2</i><i class="bd">0</i><i class="bd">.</i><i class="bd">0</i><i class="bd">0</i><i class="bd">0</i><i class="bd">0</i></div>
<div class="t" style="left:1008px;top:363px">直接领料</div>
<div class="t" style="left:1075px;top:363px">领用</div>
<div class="t" style="left:1276px;top:363px"><i class="bd">2</i><i class="bd">0</i><i class="bd">1</i><i class="bd">5</i><i class="bd" style="font-size:10.5px;position:relative;top:-2px">&#8211;</i><i class="bd">0</i><i class="bd">2</i><i class="bd" style="font-size:10.5px;position:relative;top:-2px">&#8211;</i><i class="bd">0</i><i class="bd">1</i></div>
<svg style="left:276px;top:362px" width="8" height="14" viewBox="0 0 8 14"><path d="M0.7 3.5V10.5A2.9 2.9 0 0 0 6.5 10.5V2.5A1.85 1.85 0 0 0 2.8 2.5V10.3A0.9 0.9 0 0 0 4.6 10.3V4.5" fill="none" stroke="#5a5e6a" stroke-width="1"/></svg>
<svg style="left:376px;top:362px" width="8" height="14" viewBox="0 0 8 14"><path d="M0.7 3.5V10.5A2.9 2.9 0 0 0 6.5 10.5V2.5A1.85 1.85 0 0 0 2.8 2.5V10.3A0.9 0.9 0 0 0 4.6 10.3V4.5" fill="none" stroke="#5a5e6a" stroke-width="1"/></svg>
<div class="t" style="left:22px;width:30px;top:388px;text-align:center;color:#c02828"><i class="bd">5</i></div>
<div class="t" style="left:58px;top:388px"><i class="bd">0</i><i class="bd">0</i><i class="bd">1</i></div>
<div class="t" style="left:125px;top:388px">工厂一</div>
<div class="t" style="left:225px;top:388px"><i class="bd">1</i><i class="bd">2</i><i class="bd">0</i><i class="bd">1</i><i class="bd">.</i><i class="bd">.</i><i class="bd">.</i></div>
<div class="t" style="left:292px;top:388px">子件<i class="bd">1</i><i class="bd">1</i></div>
<div class="t" style="left:392px;top:388px">什么</div>
<div class="t" style="left:459px;top:388px">公斤<i class="bd">1</i></div>
<div class="t" style="left:522px;width:105px;top:388px;text-align:right"><i class="bd">1</i><i class="bd">.</i><i class="bd">0</i><i class="bd">0</i><i class="bd">0</i><i class="bd">0</i></div>
<div class="t" style="left:629px;width:105px;top:388px;text-align:right"><i class="bd">1</i><i class="bd">.</i><i class="bd">0</i><i class="bd">0</i><i class="bd">0</i><i class="bd">0</i></div>
<div class="t" style="left:736px;width:65px;top:388px;text-align:right"><i class="bd">0</i><i class="bd">.</i><i class="bd">0</i><i class="bd">0</i><i class="bd">0</i></div>
<div class="t" style="left:807px;top:388px">否</div>
<div class="t" style="left:870px;width:65px;top:388px;text-align:right"><i class="bd">1</i><i class="bd">.</i><i class="bd">0</i><i class="bd">0</i><i class="bd">0</i><i class="bd">0</i></div>
<div class="t" style="left:937px;width:65px;top:388px;text-align:right"><i class="bd">2</i><i class="bd">0</i><i class="bd">.</i><i class="bd">0</i><i class="bd">0</i><i class="bd">0</i><i class="bd">0</i></div>
<div class="t" style="left:1008px;top:388px">直接领料</div>
<div class="t" style="left:1075px;top:388px">领用</div>
<div class="t" style="left:1142px;top:388px"><i class="bl">P</i><i class="bl">C</i>原材料仓</div>
<div class="t" style="left:1276px;top:388px"><i class="bd">2</i><i class="bd">0</i><i class="bd">1</i><i class="bd">5</i><i class="bd" style="font-size:10.5px;position:relative;top:-2px">&#8211;</i><i class="bd">0</i><i class="bd">2</i><i class="bd" style="font-size:10.5px;position:relative;top:-2px">&#8211;</i><i class="bd">0</i><i class="bd">1</i></div>
<svg style="left:276px;top:387px" width="8" height="14" viewBox="0 0 8 14"><path d="M0.7 3.5V10.5A2.9 2.9 0 0 0 6.5 10.5V2.5A1.85 1.85 0 0 0 2.8 2.5V10.3A0.9 0.9 0 0 0 4.6 10.3V4.5" fill="none" stroke="#5a5e6a" stroke-width="1"/></svg>
<svg style="left:376px;top:387px" width="8" height="14" viewBox="0 0 8 14"><path d="M0.7 3.5V10.5A2.9 2.9 0 0 0 6.5 10.5V2.5A1.85 1.85 0 0 0 2.8 2.5V10.3A0.9 0.9 0 0 0 4.6 10.3V4.5" fill="none" stroke="#5a5e6a" stroke-width="1"/></svg>
<div class="ab" style="left:222px;top:382px;width:66px;height:24px;border:1px dotted #222"></div>
<div class="ab" style="left:8px;top:231px;width:47px;height:48px;border-radius:50%;border:1px solid rgba(140,145,160,0.30);background:rgba(255,255,255,0.10)"></div>
<svg style="left:18px;top:241px" width="16" height="28"><path d="M13.5 2L3 13.5L13.5 25" fill="none" stroke="rgba(140,145,160,0.42)" stroke-width="3.4"/><path d="M13.5 2L3 13.5L13.5 25" fill="none" stroke="rgba(255,255,255,0.85)" stroke-width="1.4"/></svg>
<div class="ab" style="left:1616px;top:230px;width:50px;height:50px;border-radius:50%;border:1px solid rgba(150,155,170,0.35);background:rgba(255,255,255,0.15)"></div>
<svg style="left:1641px;top:239px" width="10" height="11"><rect x="0.75" y="0.75" width="10" height="9" fill="#f4f4f4" stroke="#4a4a4a" stroke-width="1.5"/><path d="M2.5 2.5h2.5l-2.5 2.5z M2.5 8h2.5l-2.5-2.5z" fill="#555"/></svg>
<div class="ab" style="left:0;top:17px;width:1px;height:400px;background:#7a8290"></div><div class="ab" style="left:1px;top:17px;width:1px;height:400px;background:#c4cad4"></div>
<div class="wm" style="left:31px;top:20px"><span class="wc">电话：</span><span class="wd">400-665-0028</span></div>
<div class="wm" style="left:31px;top:49px"><span class="wc">网址：</span><span class="wu">www.chanjet.net</span></div>
<div class="wm" style="left:302px;top:20px"><span class="wc">电话：</span><span class="wd">400-665-0028</span></div>
<div class="wm" style="left:302px;top:49px"><span class="wc">网址：</span><span class="wu">www.chanjet.net</span></div>
<div class="wm" style="left:573px;top:20px"><span class="wc">电话：</span><span class="wd">400-665-0028</span></div>
<div class="wm" style="left:573px;top:49px"><span class="wc">网址：</span><span class="wu">www.chanjet.net</span></div>
<div class="wm" style="left:844px;top:20px"><span class="wc">电话：</span><span class="wd">400-665-0028</span></div>
<div class="wm" style="left:844px;top:49px"><span class="wc">网址：</span><span class="wu">www.chanjet.net</span></div>
<div class="wm" style="left:1115px;top:20px"><span class="wc">电话：</span><span class="wd">400-665-0028</span></div>
<div class="wm" style="left:1115px;top:49px"><span class="wc">网址：</span><span class="wu">www.chanjet.net</span></div>
<div class="wm" style="left:1386px;top:20px"><span class="wc">电话：</span><span class="wd">400-665-0028</span></div>
<div class="wm" style="left:1386px;top:49px"><span class="wc">网址：</span><span class="wu">www.chanjet.net</span></div>
<div class="wm" style="left:31px;top:130px"><span class="wc">电话：</span><span class="wd">400-665-0028</span></div>
<div class="wm" style="left:31px;top:159px"><span class="wc">网址：</span><span class="wu">www.chanjet.net</span></div>
<div class="wm" style="left:302px;top:130px"><span class="wc">电话：</span><span class="wd">400-665-0028</span></div>
<div class="wm" style="left:302px;top:159px"><span class="wc">网址：</span><span class="wu">www.chanjet.net</span></div>
<div class="wm" style="left:573px;top:130px"><span class="wc">电话：</span><span class="wd">400-665-0028</span></div>
<div class="wm" style="left:573px;top:159px"><span class="wc">网址：</span><span class="wu">www.chanjet.net</span></div>
<div class="wm" style="left:844px;top:130px"><span class="wc">电话：</span><span class="wd">400-665-0028</span></div>
<div class="wm" style="left:844px;top:159px"><span class="wc">网址：</span><span class="wu">www.chanjet.net</span></div>
<div class="wm" style="left:1115px;top:130px"><span class="wc">电话：</span><span class="wd">400-665-0028</span></div>
<div class="wm" style="left:1115px;top:159px"><span class="wc">网址：</span><span class="wu">www.chanjet.net</span></div>
<div class="wm" style="left:1386px;top:130px"><span class="wc">电话：</span><span class="wd">400-665-0028</span></div>
<div class="wm" style="left:1386px;top:159px"><span class="wc">网址：</span><span class="wu">www.chanjet.net</span></div>
<div class="wm" style="left:31px;top:240px"><span class="wc">电话：</span><span class="wd">400-665-0028</span></div>
<div class="wm" style="left:31px;top:269px"><span class="wc">网址：</span><span class="wu">www.chanjet.net</span></div>
<div class="wm" style="left:302px;top:240px"><span class="wc">电话：</span><span class="wd">400-665-0028</span></div>
<div class="wm" style="left:302px;top:269px"><span class="wc">网址：</span><span class="wu">www.chanjet.net</span></div>
<div class="wm" style="left:573px;top:240px"><span class="wc">电话：</span><span class="wd">400-665-0028</span></div>
<div class="wm" style="left:573px;top:269px"><span class="wc">网址：</span><span class="wu">www.chanjet.net</span></div>
<div class="wm" style="left:844px;top:240px"><span class="wc">电话：</span><span class="wd">400-665-0028</span></div>
<div class="wm" style="left:844px;top:269px"><span class="wc">网址：</span><span class="wu">www.chanjet.net</span></div>
<div class="wm" style="left:1115px;top:240px"><span class="wc">电话：</span><span class="wd">400-665-0028</span></div>
<div class="wm" style="left:1115px;top:269px"><span class="wc">网址：</span><span class="wu">www.chanjet.net</span></div>
<div class="wm" style="left:1386px;top:240px"><span class="wc">电话：</span><span class="wd">400-665-0028</span></div>
<div class="wm" style="left:1386px;top:269px"><span class="wc">网址：</span><span class="wu">www.chanjet.net</span></div>
<div class="wm" style="left:31px;top:350px"><span class="wc">电话：</span><span class="wd">400-665-0028</span></div>
<div class="wm" style="left:31px;top:379px"><span class="wc">网址：</span><span class="wu">www.chanjet.net</span></div>
<div class="wm" style="left:302px;top:350px"><span class="wc">电话：</span><span class="wd">400-665-0028</span></div>
<div class="wm" style="left:302px;top:379px"><span class="wc">网址：</span><span class="wu">www.chanjet.net</span></div>
<div class="wm" style="left:573px;top:350px"><span class="wc">电话：</span><span class="wd">400-665-0028</span></div>
<div class="wm" style="left:573px;top:379px"><span class="wc">网址：</span><span class="wu">www.chanjet.net</span></div>
<div class="wm" style="left:844px;top:350px"><span class="wc">电话：</span><span class="wd">400-665-0028</span></div>
<div class="wm" style="left:844px;top:379px"><span class="wc">网址：</span><span class="wu">www.chanjet.net</span></div>
<div class="wm" style="left:1115px;top:350px"><span class="wc">电话：</span><span class="wd">400-665-0028</span></div>
<div class="wm" style="left:1115px;top:379px"><span class="wc">网址：</span><span class="wu">www.chanjet.net</span></div>
<div class="wm" style="left:1386px;top:350px"><span class="wc">电话：</span><span class="wd">400-665-0028</span></div>
<div class="wm" style="left:1386px;top:379px"><span class="wc">网址：</span><span class="wu">www.chanjet.net</span></div>
</body></html>
